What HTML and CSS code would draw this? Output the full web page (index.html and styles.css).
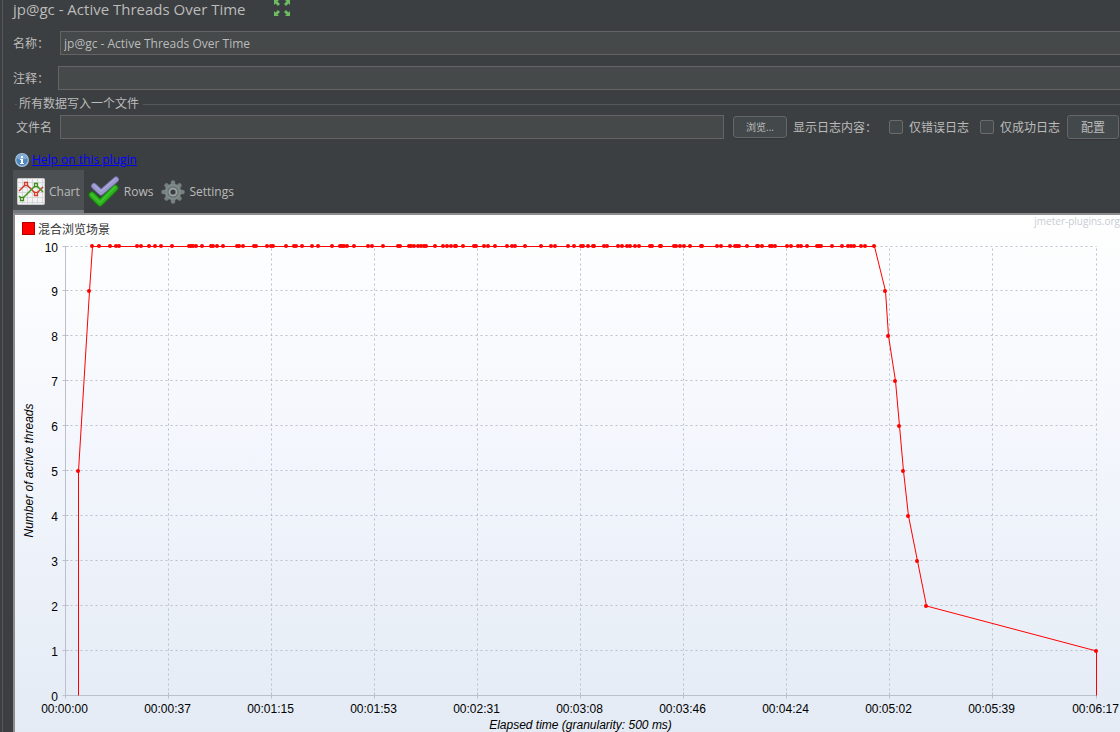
FILE: index.html
```html
<!DOCTYPE html>
<html lang="zh-CN">
<head>
<meta charset="utf-8">
<title>jp@gc - Active Threads Over Time</title>
<link rel="stylesheet" href="styles.css">
</head>
<body>
<main class="panel">
  <header class="title-bar">
    <h1 class="title">jp@gc - Active Threads Over Time</h1>
    <button class="expand" type="button" aria-label="Expand">
      <svg width="16" height="16" viewBox="0 0 16 16" fill="#6cbd62">
        <path d="M0 0h5L3.500 1.500 6 4 4 6 1.500 3.500 0 5z"/>
        <path d="M16 0v5l-1.500-1.500L12 6l-2-2 2.500-2.500L11 0z"/>
        <path d="M0 16v-5l1.500 1.500L4 10l2 2-2.500 2.500L5 16z"/>
        <path d="M16 16h-5l1.500-1.500L10 12l2-2 2.500 2.500L16 11z"/>
      </svg>
    </button>
  </header>

  <div class="field name-field">
    <label for="name">名称：</label>
    <input class="text-box" id="name" type="text" value="jp@gc - Active Threads Over Time">
  </div>
  <div class="field comment-field">
    <label for="comment">注释：</label>
    <input class="text-box" id="comment" type="text">
  </div>

  <section class="file-group">
    <h2 class="group-title">所有数据写入一个文件</h2>
    <div class="file-row">
      <label class="file-label" for="file">文件名</label>
      <input class="text-box" id="file" type="text">
      <button class="button browse" type="button">浏览...</button>
      <span class="log-label">显示日志内容：</span>
      <label class="check errors"><input type="checkbox"><span>仅错误日志</span></label>
      <label class="check"><input type="checkbox"><span>仅成功日志</span></label>
      <button class="button configure" type="button">配置</button>
    </div>
  </section>

  <div class="help">
    <svg width="14" height="14" viewBox="0 0 14 14">
      <circle cx="7" cy="7" r="6.300" fill="#4d86bd" stroke="#a9c4de" stroke-width="1.200"/>
      <path d="M2 5.500a5 5 0 0 1 10 0q-5 2-10 0z" fill="#80abd4"/>
      <path d="M6 3h2v2H6zM5 6h3v4h1v1H5v-1h1V7H5z" fill="#fff"/>
    </svg>
    <a href="#help">Help on this plugin</a>
  </div>

  <nav class="tabs">
    <button class="tab active" type="button">
      <svg width="28" height="28" viewBox="0 0 28 28">
        <rect x=".5" y=".5" width="27" height="26" rx="1" fill="#f3f3f3" stroke="#c9c9c9"/>
        <path d="M5.500 1v25M10.500 1v25M15.500 1v25M20.500 1v25M25.500 1v25M1 4.500h26M1 9.500h26M1 14.500h26M1 19.500h26M1 24.500h26" stroke="#d5d7d9" fill="none"/>
        <path d="M2 13 9 6 19 16 26 9" stroke="#d33a2c" stroke-width="1.500" fill="none"/>
        <path d="M2 18 5 21 19 7 26 14" stroke="#3f9a1c" stroke-width="1.500" fill="none"/>
        <path d="M7.500 4.500h3v3h-3zM17.500 14.500h3v3h-3z" fill="#fff" stroke="#d33a2c" stroke-width="1.300"/>
        <path d="M3.500 19.500h3v3h-3zM17.500 5.500h3v3h-3z" fill="#fff" stroke="#3f8a1c" stroke-width="1.300"/>
      </svg>
      Chart
    </button>
    <button class="tab" type="button">
      <svg width="32" height="32" viewBox="0 0 32 32" fill="none" stroke-linecap="round" stroke-linejoin="round">
        <path d="M4 19 12 27 27 12" stroke="#187d10" stroke-width="7"/>
        <path d="M4 19 12 27 27 12" stroke="#2cb51d" stroke-width="5"/>
        <path d="M3 18 12 26.500 27 11" stroke="#55cc45" stroke-width="1"/>
        <path d="M6 10 13 16.500 28 3.500" stroke="#6f6ca4" stroke-width="6"/>
        <path d="M6 10 13 16.500 28 3.500" stroke="#9c99d0" stroke-width="4.500"/>
        <path d="M6 9 13 15.500 27 3" stroke="#b3b0e0" stroke-width="1"/>
      </svg>
      Rows
    </button>
    <button class="tab" type="button">
      <svg width="24" height="24" viewBox="0 0 24 24">
        <g stroke="#75807f" stroke-width="4.500" stroke-linecap="round">
          <path d="M12 2.500v19M2.500 12h19M5.500 5.500l13 13M18.500 5.500l-13 13"/>
        </g>
        <circle cx="12" cy="12" r="8.300" fill="#7d8887"/>
        <circle cx="12" cy="12" r="5.500" fill="#5b6463"/>
        <circle cx="12" cy="12" r="4.600" fill="#98a2a1"/>
        <circle cx="12" cy="12" r="2.600" fill="#3c3f41"/>
      </svg>
      Settings
    </button>
  </nav>

  <section class="chart">
    <div class="chart-head">
      <span class="legend"><i class="swatch"></i><span>混合浏览场景</span></span>
      <span class="watermark">jmeter-plugins.org</span>
    </div>
    <svg class="plot" id="plot" role="img" aria-label="Number of active threads"></svg>
  </section>
</main>
<script src="chart.js"></script>
</body>
</html>
```
FILE: styles.css
```css
* {
  box-sizing: border-box;
}

body {
  margin: 0;
  background: #3c3f41;
  color: #bbbbbb;
  font: 12px/16px "Open Sans", "Noto Sans CJK SC", sans-serif;
}

button,
input {
  font: inherit;
  color: inherit;
}

.panel {
  display: flex;
  flex-direction: column;
  min-height: 100vh;
  margin-left: 2px;
  padding-left: 10px;
  border-left: 1px solid #555759;
}

.title-bar {
  display: flex;
  align-items: flex-start;
  gap: 28px;
  height: 31px;
}

.title {
  margin: 0;
  font-size: 15px;
  line-height: 18px;
  font-weight: 400;
}

.expand {
  display: flex;
  padding: 0;
  border: 0;
  background: none;
}

.field {
  display: flex;
  align-items: center;
}

.field label,
.file-label,
.log-label,
.check span {
  padding-top: 2px;
}

.name-field {
  gap: 11px;
}

.comment-field {
  gap: 9px;
  margin-top: 11px;
}

.text-box {
  flex: 1;
  min-width: 0;
  height: 24px;
  padding: 0 3px;
  border: 1px solid #646464;
  background: #45494a;
}

.field .text-box {
  border-right: 0;
}

.file-group {
  margin-top: 5px;
}

.group-title {
  display: flex;
  align-items: center;
  gap: 4px;
  height: 18px;
  margin: 0 0 2px 2px;
  font-size: 12px;
  font-weight: 400;
}

.group-title::before,
.group-title::after {
  content: "";
  height: 1px;
  background: #555759;
}

.group-title::before {
  width: 2px;
  margin-right: -2px;
}

.group-title::after {
  flex: 1;
}

.file-row {
  display: flex;
  align-items: center;
  padding: 0 1px 0 3px;
  white-space: nowrap;
}

.file-label {
  margin-right: 8px;
}

.button {
  height: 24px;
  padding: 0;
  border: 1px solid #646769;
  border-radius: 3px;
  background: #43484a;
  box-shadow: 0 1px 1px #323536;
}

.browse {
  width: 54px;
  height: 22px;
  margin: 0 6px 0 9px;
  font-size: 10px;
}

.configure {
  width: 52px;
  margin-left: 7px;
  padding-top: 2px;
}

.check {
  display: flex;
  align-items: center;
  gap: 6px;
}

.errors {
  margin: 0 11px 0 12px;
}

.check input {
  appearance: none;
  width: 14px;
  height: 14px;
  margin: 0;
  border: 1px solid #6b6b6b;
  border-radius: 2px;
  background: #43494a;
}

.help {
  display: flex;
  align-items: center;
  gap: 3px;
  height: 16px;
  margin: 13px 0 2px 2px;
}

.help a {
  color: #0000ff;
}

.tabs {
  display: flex;
  height: 43px;
}

.tab {
  display: flex;
  align-items: center;
  gap: 4px;
  padding: 0 4px;
  border: 0;
  background: none;
}

.active {
  background: linear-gradient(#747a80, #747a80) bottom / 100% 3px no-repeat #4c5052;
}

.chart {
  display: flex;
  flex: 1;
  flex-direction: column;
  min-height: 320px;
  border-top: 2px solid #8d8b8c;
  border-left: 2px solid #8d8b8c;
  background: linear-gradient(#ffffff, #f3f6fc 45%, #e4ebf5);
  color: #000000;
}

.chart-head {
  display: flex;
  justify-content: space-between;
  height: 20px;
  padding-left: 7px;
}

.legend {
  display: flex;
  align-items: center;
  gap: 3px;
  padding-top: 7px;
  color: #333333;
}

.legend span {
  padding-top: 2px;
}

.swatch {
  width: 13px;
  height: 13px;
  border: 1px solid #b00000;
  background: #ff0000;
}

.watermark {
  color: #c8ccd2;
  font: 10px/12px "Open Sans", sans-serif;
}

.plot {
  display: block;
  flex: 1;
  width: 100%;
  min-height: 0;
  font: 12px "Liberation Sans", sans-serif;
}

.grid {
  stroke: #bbc0cc;
  stroke-dasharray: 2 3;
}

.axis {
  fill: none;
  stroke: #bbc0cc;
}

.series {
  fill: none;
  stroke: #ff0000;
}

.dot {
  fill: #ff0000;
}

.axis-title {
  font-style: italic;
}
```
FILE: chart.js
```js
const times = ["00:00:00", "00:00:37", "00:01:15", "00:01:53", "00:02:31", "00:03:08",
  "00:03:46", "00:04:24", "00:05:02", "00:05:39", "00:06:17"];

// Sample positions along the time axis, in units of span.
const span = 1031;
const full = [27, 34, 45, 51, 54, 72, 76, 84, 90, 96, 107, 124, 126, 128, 131, 137, 146, 148,
  152, 158, 172, 174, 178, 189, 191, 202, 206, 208, 221, 229, 231, 237, 247, 253, 267, 275,
  277, 279, 282, 289, 303, 307, 318, 333, 335, 344, 346, 349, 353, 356, 359, 361, 370, 378,
  382, 386, 390, 391, 398, 409, 411, 419, 423, 430, 442, 447, 450, 460, 476, 486, 490, 503,
  509, 516, 518, 523, 528, 529, 539, 542, 553, 557, 562, 565, 570, 574, 585, 587, 595, 596,
  609, 611, 615, 619, 625, 636, 637, 652, 656, 665, 670, 672, 674, 682, 692, 693, 697, 705,
  707, 710, 722, 726, 733, 736, 742, 752, 754, 756, 767, 777, 783, 786, 789, 796, 800, 809];
const samples = [[13, 5], [24, 9], ...full.map((t) => [t, 10]),
  [820, 9], [823, 8], [830, 7], [834, 6], [838, 5], [843, 4], [852, 3], [861, 2], [1031, 1]];

const plot = document.getElementById("plot");

function add(name, attributes, text) {
  const node = document.createElementNS("http://www.w3.org/2000/svg", name);
  for (const key in attributes) node.setAttribute(key, attributes[key]);
  if (text) node.textContent = text;
  plot.append(node);
}

function draw() {
  const { width, height } = plot.getBoundingClientRect();
  const left = 50, top = 11, right = width - 24, bottom = height - 37;
  const x = (t) => Math.floor(left + t / span * (right - left) + 0.001) + 0.5;
  const y = (v) => Math.floor(bottom - v / 10 * (bottom - top)) + 0.5;
  const dotY = (v) => Math.ceil(bottom - v / 10 * (bottom - top));
  plot.replaceChildren();

  for (let i = 0; i <= 10; i++) {
    const gx = x(i * span / 10), gy = y(i);
    if (i > 0) {
      add("path", { class: "grid", d: `M${x(0)} ${gy}H${x(span)}` });
      add("path", { class: "grid", d: `M${gx} ${y(0)}V${y(10)}` });
    }
    add("path", { class: "axis", d: `M${x(0) - 3} ${gy}h6M${gx} ${y(0) - 3}v6` });
    add("text", { x: left - 7, y: gy + 5, "text-anchor": "end" }, String(i));
    add("text", { x: gx - 1, y: bottom + 18, "text-anchor": "middle" }, times[i]);
  }
  add("path", { class: "axis", d: `M${x(0)} ${y(10)}V${y(0)}H${x(span)}` });

  const line = samples.map(([t, v]) => `${x(t)} ${v === 10 ? y(v) : dotY(v)}`).join("L");
  add("path", { class: "series", d: `M${x(13)} ${y(0)}L${line}V${y(0)}` });
  for (const [t, v] of samples) {
    add("circle", { class: "dot", cx: x(t) - 0.5, cy: dotY(v), r: 2 });
  }

  const middleX = (left + right) / 2, middleY = (top + bottom) / 2;
  add("text", { class: "axis-title", x: middleX, y: bottom + 34, "text-anchor": "middle" },
    "Elapsed time (granularity: 500 ms)");
  add("text", { class: "axis-title", "text-anchor": "middle",
    transform: `translate(18 ${middleY}) rotate(-90)` }, "Number of active threads");
}

draw();
addEventListener("resize", draw);
```
